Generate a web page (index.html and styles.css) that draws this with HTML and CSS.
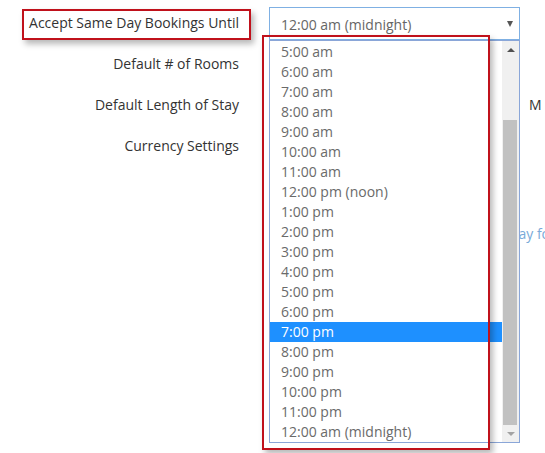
FILE: index.html
```html
<!DOCTYPE html>
<html>
<head>
<meta charset="utf-8">
<link rel="stylesheet" href="styles.css">
</head>
<body>
<div class="page">
  <div class="form">
    <div class="row">
      <div class="label">Accept Same Day Bookings Until</div>
      <div class="field">
        <div class="select">
          <span>12:00 am (midnight)</span>
          <span class="caret"></span>
        </div>
      </div>
    </div>
    <div class="row">
      <div class="label">Default # of Rooms</div>
      <div class="field"></div>
    </div>
    <div class="row">
      <div class="label">Default Length of Stay</div>
      <div class="field"><span class="side-label">M</span></div>
    </div>
    <div class="row">
      <div class="label">Currency Settings</div>
      <div class="field"></div>
    </div>
    <div class="help"><span class="link">Display fo</span></div>
  </div>

  <div class="dropdown">
    <ul class="options">
      <li>5:00 am</li>
      <li>6:00 am</li>
      <li>7:00 am</li>
      <li>8:00 am</li>
      <li>9:00 am</li>
      <li>10:00 am</li>
      <li>11:00 am</li>
      <li>12:00 pm (noon)</li>
      <li>1:00 pm</li>
      <li>2:00 pm</li>
      <li>3:00 pm</li>
      <li>4:00 pm</li>
      <li>5:00 pm</li>
      <li>6:00 pm</li>
      <li class="active">7:00 pm</li>
      <li>8:00 pm</li>
      <li>9:00 pm</li>
      <li>10:00 pm</li>
      <li>11:00 pm</li>
      <li>12:00 am (midnight)</li>
    </ul>
    <div class="scrollbar">
      <div class="arrow up"></div>
      <div class="track"><div class="thumb"></div></div>
      <div class="arrow down"></div>
    </div>
  </div>

  <div class="mark mark-label"></div>
  <div class="mark mark-list"></div>
</div>
</body>
</html>
```

FILE: styles.css
```css
html, body {
  margin: 0;
  padding: 0;
  background: #fff;
  overflow: hidden;
}

.page {
  position: relative;
  width: 545px;
  height: 453px;
  overflow: hidden;
  font-family: "Open Sans", "Liberation Sans", sans-serif;
  font-size: 14px;
  color: #333;
}

.form {
  padding-top: 2px;
}

.row {
  display: flex;
  height: 41px;
}

.label {
  width: 239px;
  flex: none;
  text-align: right;
  line-height: 41px;
  white-space: nowrap;
}

.field {
  flex: 1;
  padding-left: 30px;
  white-space: nowrap;
}

.select {
  margin-top: 5px;
  height: 31px;
  border: 1px solid #7fb0e3;
  display: flex;
  align-items: center;
  justify-content: space-between;
  padding: 1px 6px 0 11px;
  box-sizing: content-box;
  width: 232px;
  height: 30px;
  color: #666;
}

.caret {
  width: 0;
  height: 0;
  border-left: 3.5px solid transparent;
  border-right: 3.5px solid transparent;
  border-top: 6px solid #555;
}

.side-label {
  display: inline-block;
  margin-left: 260px;
  line-height: 41px;
}

.help {
  padding-left: 486px;
  margin-top: 58px;
  line-height: 20px;
  white-space: nowrap;
}

.link {
  color: #7aaad8;
}

/* open dropdown list overlay */
.dropdown {
  position: absolute;
  left: 269px;
  top: 40px;
  width: 249px;
  height: 401px;
  border: 1px solid #8aa6d8;
  background: #fff;
  display: flex;
}

.options {
  list-style: none;
  margin: 0;
  padding: 1px 0 0;
  flex: 1;
}

.options li {
  height: 20px;
  line-height: 20px;
  padding-left: 11px;
  color: #6a6a6a;
  white-space: nowrap;
}

.options li.active {
  background: #1e90ff;
  color: #fff;
}

.scrollbar {
  width: 17px;
  flex: none;
  background: #f0f0f0;
  display: flex;
  flex-direction: column;
}

.arrow {
  height: 17px;
  display: flex;
  align-items: center;
  justify-content: center;
}

.arrow::before {
  content: "";
  width: 0;
  height: 0;
  border-left: 4px solid transparent;
  border-right: 4px solid transparent;
}

.arrow.up::before {
  border-bottom: 4px solid #505050;
}

.arrow.down::before {
  border-top: 4px solid #a3a3a3;
}

.track {
  flex: 1;
  display: flex;
  flex-direction: column;
  padding: 62px 2px 0 1px;
}

.thumb {
  flex: 1;
  background: #c1c1c1;
}

/* red annotation boxes */
.mark {
  position: absolute;
  border: 2px solid #c0111b;
  box-shadow: 3px 4px 6px rgba(0, 0, 0, 0.28);
  box-sizing: border-box;
  pointer-events: none;
}

.mark-label {
  left: 22px;
  top: 9px;
  width: 229px;
  height: 31px;
}

.mark-list {
  left: 262px;
  top: 35px;
  width: 228px;
  height: 415px;
}
```
